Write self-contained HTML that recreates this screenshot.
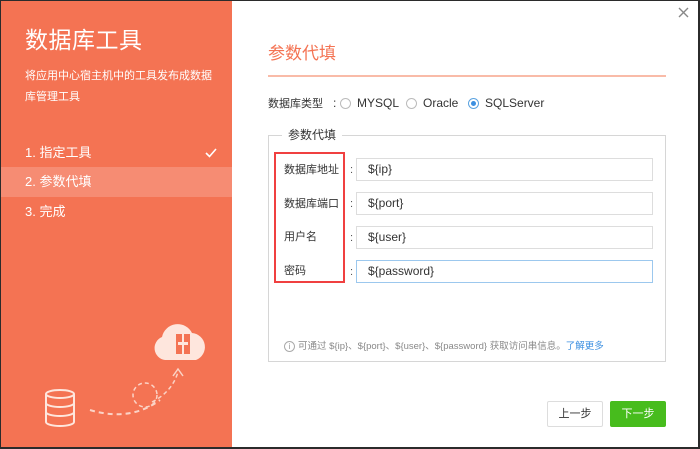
<!DOCTYPE html>
<html><head><meta charset="utf-8"><style>
*{margin:0;padding:0;box-sizing:border-box}
body{width:700px;height:449px;overflow:hidden;background:#fff;font-family:"Liberation Sans","Noto Sans CJK SC",sans-serif;position:relative}
.frame{position:absolute;left:0;top:0;width:700px;height:449px;border:1px solid #2b2b2b;border-right-width:2px;border-bottom-width:2px;z-index:10;pointer-events:none}
.left{position:absolute;left:0;top:0;width:232px;height:449px;background:#F47353;color:#fff}
.left h1{position:absolute;left:25px;top:26px;font-size:23px;font-weight:normal;letter-spacing:0.5px;line-height:28px}
.left .desc{position:absolute;left:25px;top:66px;width:190px;font-size:11px;line-height:21px}
.step{position:absolute;left:0;width:232px;height:30px;line-height:30px;padding-left:25px;font-size:13px}
.step.on{background:#F68C73}
.abs{position:absolute}
.title{left:268px;top:44px;font-size:17px;color:#F47353;line-height:20px}
.uline{left:268px;top:75px;width:398px;height:2px;background:#F9BBA8}
.lbl{font-size:12px;color:#333;line-height:14px}
.radio{width:11px;height:11px;border:1px solid #bbb;border-radius:50%;display:inline-block;position:absolute}
.fs{left:268px;top:135px;width:398px;height:227px;border:1px solid #d6d6d6}
.legend{left:282px;top:128px;background:#fff;padding:0 6px;font-size:12px;color:#333;line-height:14px}
.inp{position:absolute;left:356px;width:297px;height:23px;border:1px solid #ddd;font-size:12px;color:#333;line-height:21px;padding-left:11px}
.red{left:274px;top:152px;width:71px;height:131px;border:2px solid #F04040}
.fl{position:absolute;left:284px;font-size:11px;color:#333;line-height:12px}
.colon{position:absolute;left:350px;font-size:11px;color:#555;line-height:12px}
.btn{position:absolute;top:401px;height:26px;width:56px;font-size:11px;text-align:center;line-height:24px;border:1px solid #ddd;border-radius:2px}
</style></head><body>
<div class="frame"></div>
<div class="left">
<h1>数据库工具</h1>
<div class="desc">将应用中心宿主机中的工具发布成数据库管理工具</div>
<div class="step" style="top:138px">1. 指定工具<svg style="position:absolute;right:15px;top:10px" width="12" height="10" viewBox="0 0 12 10"><path d="M1 5 L4.5 8.5 L11 1" stroke="#fff" stroke-width="1.6" fill="none"/></svg></div>
<div class="step on" style="top:167px">2. 参数代填</div>
<div class="step" style="top:197px">3. 完成</div>
<svg class="abs" style="left:0;top:300px" width="232" height="149" viewBox="0 0 232 149">
<path d="M90 110 Q130 122 160 100" stroke="#FBD3C6" stroke-width="2" fill="none" stroke-dasharray="5 4"/>
<circle cx="145" cy="95" r="12" stroke="#FBD3C6" stroke-width="1.5" fill="none" stroke-dasharray="4 3"/>
<path d="M152 102 Q172 92 178 72" stroke="#FBD3C6" stroke-width="1.5" fill="none" stroke-dasharray="4 3"/>
<path d="M173 76 L178 69 L183 76" stroke="#FBD3C6" stroke-width="1.5" fill="none"/>
<path d="M165 60 A12 12 0 0 1 162 37 A16 16 0 0 1 192 33 A14 14 0 0 1 196 60 Z" fill="#FEE6DD"/>
<rect x="176" y="34" width="14" height="20" fill="#F47353"/>
<rect x="178" y="42" width="10" height="3" fill="#FEE6DD"/>
<rect x="182" y="34" width="2" height="20" fill="#FEE6DD"/>
<g fill="none" stroke="#FEE6DD" stroke-width="2">
<ellipse cx="60" cy="94" rx="14" ry="4"/>
<path d="M46 94 V122 A14 4 0 0 0 74 122 V94"/>
<path d="M46 103 A14 4 0 0 0 74 103"/>
<path d="M46 112 A14 4 0 0 0 74 112"/>
</g>
</svg>
</div>
<svg class="abs" style="left:678px;top:7px" width="11" height="11" viewBox="0 0 11 11"><path d="M1 1 L10 10 M10 1 L1 10" stroke="#888" stroke-width="1.4"/></svg>
<div class="abs title">参数代填</div>
<div class="abs uline"></div>
<div class="abs lbl" style="left:268px;top:97px;font-size:11px">数据库类型</div>
<div class="abs lbl" style="left:333px;top:96px">:</div>
<span class="radio" style="left:340px;top:98px"></span>
<div class="abs lbl" style="left:357px;top:96px">MYSQL</div>
<span class="radio" style="left:406px;top:98px"></span>
<div class="abs lbl" style="left:423px;top:96px">Oracle</div>
<span class="radio" style="left:468px;top:98px;border-color:#5ba3e0"><span style="position:absolute;left:2px;top:2px;width:5px;height:5px;border-radius:50%;background:#3C8FE0"></span></span>
<div class="abs lbl" style="left:485px;top:96px">SQLServer</div>
<div class="abs fs"></div>
<div class="abs legend">参数代填</div>
<div class="abs red"></div>
<div class="fl" style="top:164px">数据库地址</div><div class="colon" style="top:164px">:</div>
<div class="inp" style="top:158px">${ip}</div>
<div class="fl" style="top:198px">数据库端口</div><div class="colon" style="top:198px">:</div>
<div class="inp" style="top:192px">${port}</div>
<div class="fl" style="top:231px">用户名</div><div class="colon" style="top:232px">:</div>
<div class="inp" style="top:226px">${user}</div>
<div class="fl" style="top:265px">密码</div><div class="colon" style="top:266px">:</div>
<div class="inp" style="top:260px;border-color:#9cc8ee">${password}</div>
<div class="abs" style="left:284px;top:341px;width:11px;height:11px;border:1px solid #aaa;border-radius:50%;font-size:8px;color:#999;text-align:center;line-height:9px">i</div>
<div class="abs" style="left:298px;top:341px;font-size:9.5px;color:#888;line-height:11px">可通过 ${ip}、${port}、${user}、${password} 获取访问串信息。<span style="color:#3C8FE0">了解更多</span></div>
<div class="btn" style="left:547px;color:#333;background:#fff">上一步</div>
<div class="btn" style="left:610px;color:#fff;background:#47BC1D;border-color:#47BC1D">下一步</div>
</body></html>
